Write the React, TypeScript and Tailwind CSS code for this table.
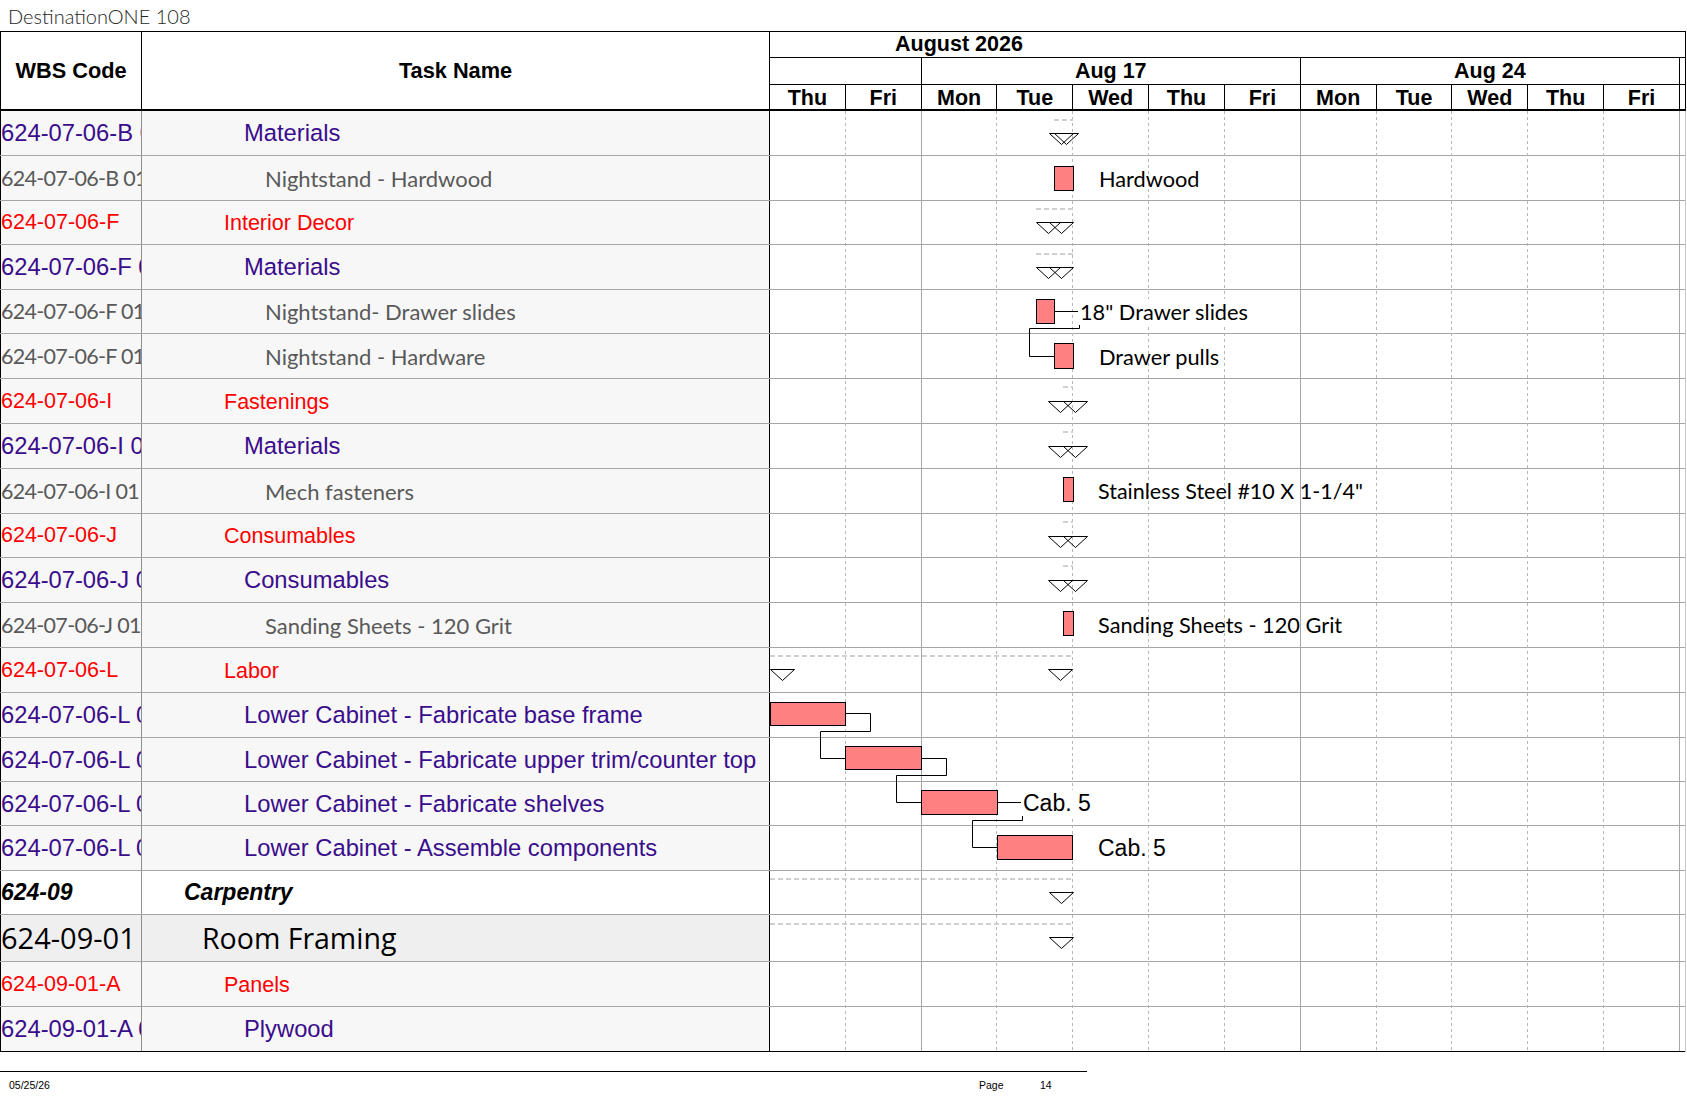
import clsx from 'clsx'

type Kind = 'purple' | 'gray' | 'red' | 'carpentry' | 'framing'

interface Row {
  wbs: string
  name: string
  kind: Kind
  h: string
}

const arial = "font-['Liberation_Sans',Arial,sans-serif]"
const lato = "font-['Lato','Noto_Sans',sans-serif]"

const rows: Row[] = [
  { wbs: '624-07-06-B 01', name: 'Materials', kind: 'purple', h: 'h-[45px]' },
  { wbs: '624-07-06-B 01 01', name: 'Nightstand - Hardwood', kind: 'gray', h: 'h-[45px]' },
  { wbs: '624-07-06-F', name: 'Interior Decor', kind: 'red', h: 'h-[44px]' },
  { wbs: '624-07-06-F 01', name: 'Materials', kind: 'purple', h: 'h-[45px]' },
  { wbs: '624-07-06-F 01 01', name: 'Nightstand- Drawer slides', kind: 'gray', h: 'h-[44px]' },
  { wbs: '624-07-06-F 01 02', name: 'Nightstand - Hardware', kind: 'gray', h: 'h-[45px]' },
  { wbs: '624-07-06-I', name: 'Fastenings', kind: 'red', h: 'h-[45px]' },
  { wbs: '624-07-06-I 01', name: 'Materials', kind: 'purple', h: 'h-[45px]' },
  { wbs: '624-07-06-I 01 01', name: 'Mech fasteners', kind: 'gray', h: 'h-[45px]' },
  { wbs: '624-07-06-J', name: 'Consumables', kind: 'red', h: 'h-[44px]' },
  { wbs: '624-07-06-J 01', name: 'Consumables', kind: 'purple', h: 'h-[45px]' },
  { wbs: '624-07-06-J 01 01', name: 'Sanding Sheets - 120 Grit', kind: 'gray', h: 'h-[45px]' },
  { wbs: '624-07-06-L', name: 'Labor', kind: 'red', h: 'h-[45px]' },
  { wbs: '624-07-06-L 01', name: 'Lower Cabinet - Fabricate base frame', kind: 'purple', h: 'h-[45px]' },
  { wbs: '624-07-06-L 02', name: 'Lower Cabinet - Fabricate upper trim/counter top', kind: 'purple', h: 'h-[44px]' },
  { wbs: '624-07-06-L 03', name: 'Lower Cabinet - Fabricate shelves', kind: 'purple', h: 'h-[44px]' },
  { wbs: '624-07-06-L 04', name: 'Lower Cabinet - Assemble components', kind: 'purple', h: 'h-[45px]' },
  { wbs: '624-09', name: 'Carpentry', kind: 'carpentry', h: 'h-[44px]' },
  { wbs: '624-09-01', name: 'Room Framing', kind: 'framing', h: 'h-[47px]' },
  { wbs: '624-09-01-A', name: 'Panels', kind: 'red', h: 'h-[45px]' },
  { wbs: '624-09-01-A 01', name: 'Plywood', kind: 'purple', h: 'h-[45px]' },
]

const wbsStyle: Record<Kind, string> = {
  purple: "font-['Liberation_Sans',Arial,sans-serif] text-[23.75px] text-[#3a0d8c]",
  gray: "font-['Lato','Noto_Sans',sans-serif] text-[21.5px] tracking-[-0.7px] text-[#595959]",
  red: "font-['Liberation_Sans',Arial,sans-serif] text-[21.5px] text-[#ff0000]",
  carpentry: "font-['Liberation_Sans',Arial,sans-serif] text-[23px] font-bold italic text-black",
  framing: "font-['Open_Sans',sans-serif] text-[29px] text-black",
}

const nameStyle: Record<Kind, string> = {
  purple: "font-['Liberation_Sans',Arial,sans-serif] text-[23.75px] text-[#3a0d8c]",
  gray: "font-['Lato','Noto_Sans',sans-serif] text-[22px] text-[#595959]",
  red: "font-['Liberation_Sans',Arial,sans-serif] text-[21.5px] text-[#ff0000] pt-[2px]",
  carpentry: "font-['Liberation_Sans',Arial,sans-serif] text-[23px] font-bold italic text-black",
  framing: "font-['Open_Sans',sans-serif] text-[28.5px] text-black",
}

const indent: Record<Kind, string> = {
  purple: 'pl-[102px]',
  gray: 'pl-[123px]',
  red: 'pl-[82px]',
  carpentry: 'pl-[42px]',
  framing: 'pl-[60px]',
}

const rowBg: Record<Kind, string> = {
  purple: 'bg-[#f7f7f7]',
  gray: 'bg-[#f7f7f7]',
  red: 'bg-[#f7f7f7]',
  carpentry: 'bg-white',
  framing: 'bg-[#efefef]',
}

const days = ['Thu', 'Fri', 'Mon', 'Tue', 'Wed', 'Thu', 'Fri', 'Mon', 'Tue', 'Wed', 'Thu', 'Fri']

// chart geometry is noted in page pixels; the body starts at (770, 111)
const X = (x: number) => x - 770
const Y = (y: number) => y - 111

const bars = [
  [1054, 1073, 166, 190],
  [1036, 1054, 299, 323],
  [1054, 1073, 343, 368],
  [1063, 1073, 477, 501],
  [1063, 1073, 611, 635],
  [770, 845, 702, 725],
  [845, 921, 746, 769],
  [921, 997, 790, 814],
  [997, 1072, 835, 859],
]

const links = [
  [[1054, 311.5], [1079.5, 311.5], [1079.5, 328.5], [1029.5, 328.5], [1029.5, 356.5], [1054, 356.5]],
  [[845, 713.5], [870.5, 713.5], [870.5, 731.5], [820.5, 731.5], [820.5, 758.5], [845, 758.5]],
  [[921, 758.5], [946.5, 758.5], [946.5, 775.5], [896.5, 775.5], [896.5, 802.5], [921, 802.5]],
  [[997, 802.5], [1022.5, 802.5], [1022.5, 820.5], [972.5, 820.5], [972.5, 847.5], [997, 847.5]],
]

// summary rows: dashed span + end markers
const summaries: { y: number; from: number; to: number; top: number; marks: number[] }[] = [
  { y: 120, from: 1054, to: 1073, top: 133, marks: [1049, 1054] },
  { y: 209, from: 1036, to: 1073, top: 222, marks: [1036, 1049] },
  { y: 254, from: 1036, to: 1073, top: 267, marks: [1036, 1049] },
  { y: 387, from: 1063, to: 1073, top: 401, marks: [1048, 1063] },
  { y: 432, from: 1063, to: 1073, top: 446, marks: [1048, 1063] },
  { y: 522, from: 1063, to: 1073, top: 536, marks: [1048, 1063] },
  { y: 566, from: 1063, to: 1073, top: 580, marks: [1048, 1063] },
  { y: 656, from: 770, to: 1073, top: 669, marks: [770, 1048] },
  { y: 879, from: 770, to: 1073, top: 892, marks: [1049] },
  { y: 924, from: 770, to: 1073, top: 937, marks: [1049] },
]

const labels = [
  { text: 'Hardwood', cls: `left-[329px] top-[55px] ${lato} text-[21.75px]` },
  { text: '18" Drawer slides', cls: `left-[308px] top-[188px] bg-white pl-[2px] ${lato} text-[21.75px]` },
  { text: 'Drawer pulls', cls: `left-[329px] top-[233px] ${lato} text-[21.75px]` },
  { text: 'Stainless Steel #10 X 1-1/4"', cls: `left-[328px] top-[367px] ${lato} text-[21.5px]` },
  { text: 'Sanding Sheets - 120 Grit', cls: `left-[328px] top-[501px] ${lato} text-[21.75px]` },
  { text: 'Cab. 5', cls: `left-[251px] top-[679px] bg-white pl-[2px] ${arial} text-[23px]` },
  { text: 'Cab. 5', cls: `left-[328px] top-[724px] ${arial} text-[23px]` },
]

const GanttChart = () => (
  <svg className="absolute left-0 top-0" width={915} height={941}>
    {Array.from({ length: 12 }, (_, i) => {
      const k = i + 1
      const x = Math.round(75.83 * k) - 0.5
      const week = k === 2 || k === 7 || k === 12
      return (
        <line
          key={k}
          x1={x}
          x2={x}
          y1={0}
          y2={940}
          stroke={week ? '#a6a6a6' : '#b8b8b8'}
          strokeDasharray={week ? undefined : '3 3'}
        />
      )
    })}
    {summaries.map((s, i) => (
      <g key={i}>
        <line x1={X(s.from)} x2={X(s.to)} y1={Y(s.y)} y2={Y(s.y)} stroke="#d0d0d0" strokeWidth={2} strokeDasharray="5 3" />
        {s.marks.map((m) => (
          <polygon
            key={m}
            points={`${X(m) + 0.5},${Y(s.top) + 0.5} ${X(m) + 24.5},${Y(s.top) + 0.5} ${X(m) + 12.5},${Y(s.top) + 11.5}`}
            fill="none"
            stroke="#000"
          />
        ))}
      </g>
    ))}
    {links.map((pts, i) => (
      <polyline key={i} points={pts.map(([x, y]) => `${X(x)},${Y(y)}`).join(' ')} fill="none" stroke="#000" />
    ))}
    {bars.map(([x1, x2, y1, y2], i) => (
      <rect key={i} x={X(x1) + 0.5} y={Y(y1) + 0.5} width={x2 - x1} height={y2 - y1} fill="#ff8080" stroke="#000" />
    ))}
  </svg>
)

export default function App() {
  const last = rows.length - 1
  return (
    <div className={clsx('h-[1097px] w-[1687px] overflow-hidden bg-white text-black', arial)}>
      <div className={clsx('flex h-[31px] items-center pl-[8px] text-[20px] font-light text-[#262626]', lato)}>
        DestinationONE 108
      </div>

      <div className="flex">
        {/* task table */}
        <div className="w-[770px]">
          <div className="flex h-[80px] border-t border-b-2 border-black text-[21.75px] leading-none font-bold">
            <div className="flex w-[142px] items-center justify-center border-x border-black">WBS Code</div>
            <div className="flex w-[628px] items-center justify-center border-r border-black">Task Name</div>
          </div>
          {rows.map((r, i) => (
            <div
              key={i}
              className={clsx(
                'flex border-b',
                r.h,
                rowBg[r.kind],
                i === last ? 'border-black' : 'border-[#a6a6a6]',
              )}
            >
              <div
                className={clsx(
                  'flex w-[142px] items-center overflow-hidden whitespace-nowrap border-l border-r border-l-black border-r-[#8f8f8f]',
                  wbsStyle[r.kind],
                )}
              >
                {r.wbs}
              </div>
              <div
                className={clsx(
                  'flex w-[628px] items-center whitespace-nowrap border-r border-black',
                  indent[r.kind],
                  nameStyle[r.kind],
                )}
              >
                {r.name}
              </div>
            </div>
          ))}
        </div>

        {/* gantt */}
        <div className="w-[916px]">
          <div className="flex h-[80px] flex-col border-t border-r border-b-2 border-black text-[21.5px] leading-none font-bold">
            <div className="flex h-[26px] items-center border-b border-black pt-[1px] pl-[125px]">August 2026</div>
            <div className="grid h-[27px] grid-cols-[repeat(12,75.83px)_1fr] grid-rows-1 border-b border-black">
              <div className="col-span-2 border-r border-black" />
              <div className="col-span-5 flex items-center justify-center border-r border-black pt-[2px]">Aug 17</div>
              <div className="col-span-5 flex items-center justify-center border-r border-black pt-[2px]">Aug 24</div>
              <div />
            </div>
            <div className="grid h-[24px] grid-cols-[repeat(12,75.83px)_1fr] grid-rows-1">
              {days.map((d, i) => (
                <div key={i} className="flex items-center justify-center border-r border-black pt-[3px]">
                  {d}
                </div>
              ))}
              <div />
            </div>
          </div>
          <div className="relative border-r border-[#c8c8c8]">
            {rows.map((r, i) => (
              <div key={i} className={clsx('border-b', r.h, i === last ? 'border-black' : 'border-[#a6a6a6]')} />
            ))}
            <GanttChart />
            {labels.map((l, i) => (
              <div key={i} className={clsx('absolute flex h-[26px] items-center whitespace-nowrap text-black', l.cls)}>
                {l.text}
              </div>
            ))}
          </div>
        </div>
      </div>

      <div className="mt-[19px] flex w-[1087px] border-t border-black pt-[6px] text-[10.5px] text-black">
        <span className="w-[979px] pl-[9px]">05/25/26</span>
        <span className="w-[61px]">Page</span>
        <span>14</span>
      </div>
    </div>
  )
}
